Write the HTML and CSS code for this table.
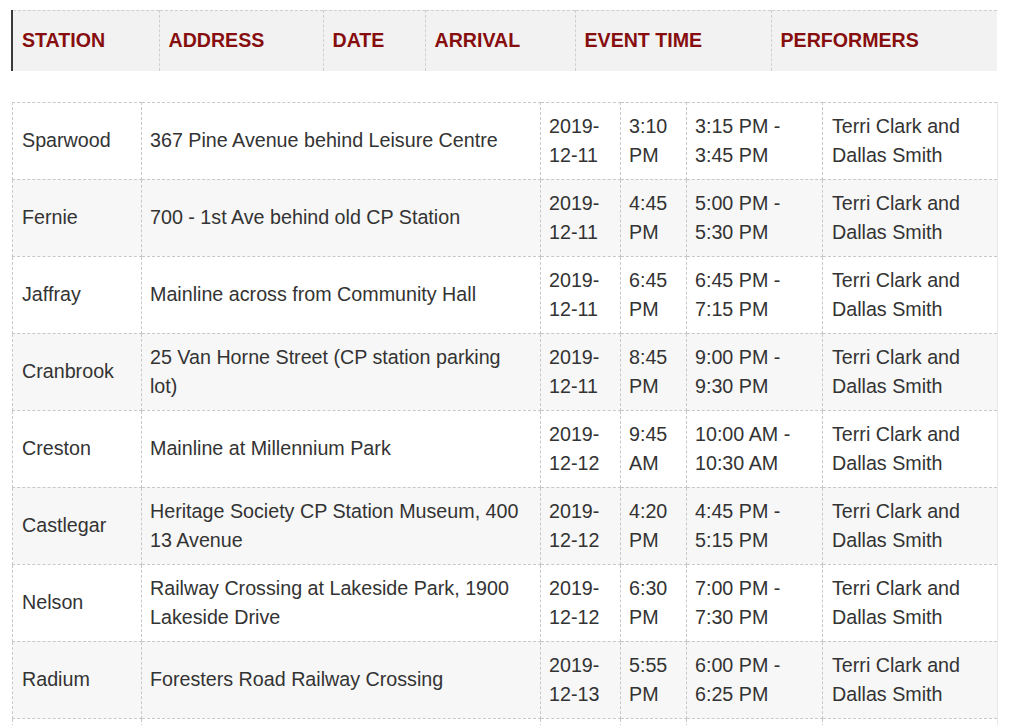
FILE: index.html
```html
<!DOCTYPE html>
<html>
<head>
<meta charset="utf-8">
<link rel="stylesheet" href="styles.css">
</head>
<body>
<div class="page">
  <table class="head-table">
    <colgroup>
      <col class="h1"><col class="h2"><col class="h3"><col class="h4"><col class="h5"><col class="h6">
    </colgroup>
    <tr>
      <th>STATION</th><th>ADDRESS</th><th>DATE</th><th>ARRIVAL</th><th>EVENT TIME</th><th>PERFORMERS</th>
    </tr>
  </table>

  <table class="data-table">
    <colgroup>
      <col class="c1"><col class="c2"><col class="c3"><col class="c4"><col class="c5"><col class="c6">
    </colgroup>
    <tr><td>Sparwood</td><td>367 Pine Avenue behind Leisure Centre</td><td>2019-12-11</td><td>3:10 PM</td><td>3:15 PM - 3:45 PM</td><td>Terri Clark and Dallas Smith</td></tr>
    <tr><td>Fernie</td><td>700 - 1st Ave behind old CP Station</td><td>2019-12-11</td><td>4:45 PM</td><td>5:00 PM - 5:30 PM</td><td>Terri Clark and Dallas Smith</td></tr>
    <tr><td>Jaffray</td><td>Mainline across from Community Hall</td><td>2019-12-11</td><td>6:45 PM</td><td>6:45 PM - 7:15 PM</td><td>Terri Clark and Dallas Smith</td></tr>
    <tr><td>Cranbrook</td><td>25 Van Horne Street (CP station parking lot)</td><td>2019-12-11</td><td>8:45 PM</td><td>9:00 PM - 9:30 PM</td><td>Terri Clark and Dallas Smith</td></tr>
    <tr><td>Creston</td><td>Mainline at Millennium Park</td><td>2019-12-12</td><td>9:45 AM</td><td>10:00 AM - 10:30 AM</td><td>Terri Clark and Dallas Smith</td></tr>
    <tr><td>Castlegar</td><td>Heritage Society CP Station Museum, 400 13 Avenue</td><td>2019-12-12</td><td>4:20 PM</td><td>4:45 PM - 5:15 PM</td><td>Terri Clark and Dallas Smith</td></tr>
    <tr><td>Nelson</td><td>Railway Crossing at Lakeside Park, 1900 Lakeside Drive</td><td>2019-12-12</td><td>6:30 PM</td><td>7:00 PM - 7:30 PM</td><td>Terri Clark and Dallas Smith</td></tr>
    <tr><td>Radium</td><td>Foresters Road Railway Crossing</td><td>2019-12-13</td><td>5:55 PM</td><td>6:00 PM - 6:25 PM</td><td>Terri Clark and Dallas Smith</td></tr>
    <tr class="empty-row"><td></td><td></td><td></td><td></td><td></td><td></td></tr>
  </table>
</div>
</body>
</html>
```

FILE: styles.css
```css
html, body {
  margin: 0;
  padding: 0;
  background: #ffffff;
}

body {
  font-family: "Liberation Sans", Arial, Helvetica, sans-serif;
  color: #333333;
  overflow: hidden;
  height: 725px;
}

.page {
  padding: 10px 0 0 11px;
}

table {
  border-collapse: collapse;
  table-layout: fixed;
}

.head-table {
  width: 985px;
  background: #f2f2f2;
  border-left: 2px solid #3a3a3a;
  border-top: 1px dashed #cfcfcf;
}

.head-table th {
  height: 60px;
  padding: 0 8px 1px 9px;
  text-align: left;
  font-size: 19.6px;
  font-weight: bold;
  color: #870e0e;
  border-left: 1px dashed #cfcfcf;
  vertical-align: middle;
  box-sizing: border-box;
  white-space: nowrap;
}

.head-table th:first-child {
  border-left: 2px solid #3a3a3a;
}

.h1 { width: 147px; }
.h2 { width: 164px; }
.h3 { width: 102px; }
.h4 { width: 150px; }
.h5 { width: 196px; }
.h6 { width: 226px; }

.data-table {
  width: 985px;
  margin-top: 31px;
  margin-left: 1px;
  border-right: 1px solid #e8e8e8;
}

.data-table td {
  padding: 9px 8px 9px 8px;
  font-size: 19.7px;
  line-height: 29px;
  vertical-align: middle;
  border: 1px dashed #c8c8c8;
  color: #333333;
}

.data-table td:first-child {
  padding-left: 9px;
}

.data-table td:last-child {
  border-right: 1px solid #e8e8e8;
  padding-left: 9px;
}

.data-table tr:nth-child(even) td {
  background: #f7f7f7;
}

.empty-row td {
  height: 40px;
}

.c1 { width: 129px; }
.c2 { width: 399px; }
.c3 { width: 80px; }
.c4 { width: 66px; }
.c5 { width: 136px; }
.c6 { width: 175px; }
```
